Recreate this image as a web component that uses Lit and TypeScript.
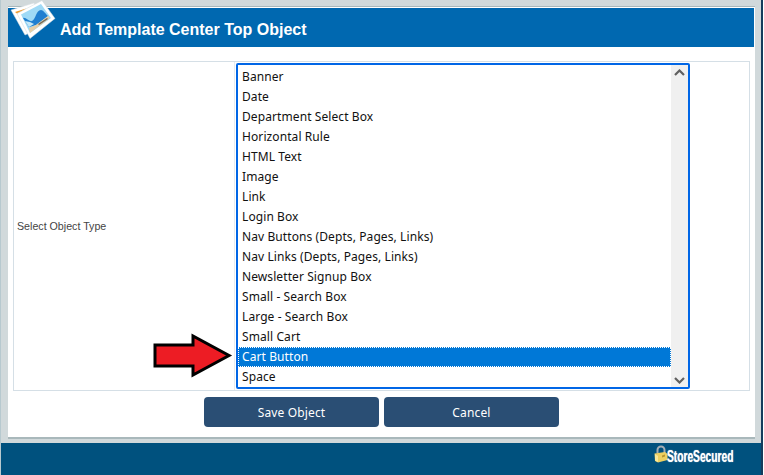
import { LitElement, html, css } from "lit";
import { customElement } from "lit/decorators.js";

const ITEMS = [
  "Banner", "Date", "Department Select Box", "Horizontal Rule", "HTML Text", "Image", "Link", "Login Box",
  "Nav Buttons (Depts, Pages, Links)", "Nav Links (Depts, Pages, Links)", "Newsletter Signup Box",
  "Small - Search Box", "Large - Search Box", "Small Cart", "Cart Button", "Space",
];

@customElement("app-root")
export class AppRoot extends LitElement {
  static styles = css`
    :host { display: block; width: 764px; height: 475px; overflow: hidden; position: relative; background: #d1d9db; font-family: "Noto Sans", sans-serif; }
    .page { display: flex; flex-direction: column; height: 475px; padding: 6px 2px 0 0; box-sizing: border-box; border-right: 1px solid #fff; border-left: 1px solid #b7c9cf; position: relative; }
    .strip { position: absolute; top: 0; bottom: 0; right: 0; width: 2px; background: #153c5c; }
    .dialog { margin-left: 7px; width: 747px; height: 433px; flex: none; box-sizing: border-box; background: #fff; border-top: 1px solid #a9b8bb; border-bottom: 2px solid #a9b8bb; padding-top: 1px; display: flex; flex-direction: column; }
    .head { height: 39px; background: #0068b0; display: flex; align-items: center; padding: 5px 0 0 52px; box-sizing: border-box; flex: none; margin-right: 1px; }
    .head h1 { margin: 0; color: #fff; font: bold 16px "Liberation Sans", sans-serif; }
    .table { margin: 14px 0 0 5px; height: 330px; width: 737px; border: 1px solid #d5dfe6; box-sizing: border-box; display: flex; padding: 1px 0; }
    .label { width: 220px; padding-left: 3px; align-self: center; font: 10.67px "Liberation Sans", sans-serif; color: #444; flex: none; box-sizing: border-box; }
    .gutter { width: 1px; background: #e6ecf0; margin: -1px 1px -1px 0; flex: none; }
    .list { width: 454px; height: 326px; box-sizing: border-box; border: 2px solid #0066e6; border-radius: 2px; display: flex; background: #fff; overflow: hidden; }
    .rows { flex: 1; padding-top: 2px; }
    .row { height: 20px; line-height: 19px; padding-left: 4px; font-size: 12px; color: #111; box-sizing: border-box; letter-spacing: 0.09px; }
    .row.sel { background: #0078d7; color: #fff; outline: 1px dotted #fff; outline-offset: -1px; }
    .sb { width: 17px; background: #f0f0f0; display: flex; flex-direction: column; justify-content: space-between; align-items: center; padding: 4px 0 3px; box-sizing: border-box; flex: none; }
    .sb svg { display: block; }
    .buttons { display: flex; gap: 5px; justify-content: center; margin-top: 6px; }
    .btn { width: 175px; height: 30px; border: 0; border-radius: 4px; background: #2a4e74; color: #fff; font: 12px "Noto Sans", sans-serif; letter-spacing: 0.15px; padding: 0; }
    .foot { margin-top: 4px; flex: 1; background: #00517e; display: flex; justify-content: flex-end; align-items: flex-start; padding: 2px 27px 0 0; }
    .brand { display: flex; align-items: flex-start; }
    .word { display: inline-block; color: #fff; font: bold 14px/16px "Liberation Sans", sans-serif; transform: scale(0.73, 1.2); transform-origin: 0 0; width: 66px; margin-left: -1px; margin-right: 1px; white-space: nowrap; margin-top: 1px; text-shadow: 0 0 1px #dfe4e7; }
    .logo { position: absolute; left: 9px; top: 0; }
    .arrow { position: absolute; left: 152px; top: 333px; }
  `;

  render() {
    return html`
      <div class="page">
        <div class="dialog">
          <div class="head"><h1>Add Template Center Top Object</h1></div>
          <div class="table">
            <div class="label">Select Object Type</div>
            <div class="gutter"></div>
            <div class="list">
              <div class="rows">
                ${ITEMS.map((t) => html`<div class="row ${t === "Cart Button" ? "sel" : ""}">${t}</div>`)}
              </div>
              <div class="sb">
                <svg width="11" height="7" viewBox="0 0 11 7"><path d="M1 6L5.5 1.5L10 6" fill="none" stroke="#606060" stroke-width="2.2"/></svg>
                <svg width="11" height="7" viewBox="0 0 11 7"><path d="M1 1L5.5 5.5L10 1" fill="none" stroke="#606060" stroke-width="2.2"/></svg>
              </div>
            </div>
          </div>
          <div class="buttons">
            <button class="btn">Save Object</button>
            <button class="btn">Cancel</button>
          </div>
        </div>
        <div class="foot">
          <div class="brand">
            <svg width="14" height="18" viewBox="0 0 14 18">
              <path d="M3.5 8V5a3.5 3.5 0 0 1 7 0v3" fill="none" stroke="#a3adb5" stroke-width="2"/>
              <path d="M0.5 8.5L11 7L13.5 9V15L4 17.5L1 16Z" fill="#ecd062"/>
              <path d="M1 9L4 11V17L1 15.5Z" fill="#f8e89a"/>
              <path d="M8 10.5l3-1v2l-3 1z" fill="#b8962f"/>
            </svg>
            <span class="word">StoreSecured</span>
          </div>
        </div>
        <div class="strip"></div>
      </div>
      <svg class="logo" width="48" height="40" viewBox="9 0 48 40">
        <path d="M11 10L34 3L44 26L25 35Z" fill="#fff" stroke="#d8dfe3" stroke-width=".5"/>
        <path d="M15 12L26 8.5L19 15Z" fill="#ef9a2c"/>
        <path d="M17 13.5L42 0.5L55 18.5L30 38.5Z" fill="#fff" stroke="#cfd8dd" stroke-width=".5"/>
        <path d="M21 14.5L41 4L51 18L30 33Z" fill="#9fdaf6"/>
        <path d="M23 18C26 17 29 22 32 21C36 19 36 10 41 10C43 10 45 13 48 16L36 25L29 27Z" fill="#1f7fd0"/>
        <path d="M25 21L29 27L34 24L30 22Z" fill="#c5e8f8"/>
        <path d="M29 28L36 25L48 16L50 18L30 33Z" fill="#e6cfa8"/>
        <path d="M38 24L47 18L48 19L39 25Z" fill="#6f6a5e"/>
      </svg>
      <svg class="arrow" width="82" height="46" viewBox="152 333 82 46">
        <path d="M155 345H193V336L229 355.5L193 375V366H155Z" fill="#ed1c24" stroke="#000" stroke-width="3"/>
      </svg>
    `;
  }
}
